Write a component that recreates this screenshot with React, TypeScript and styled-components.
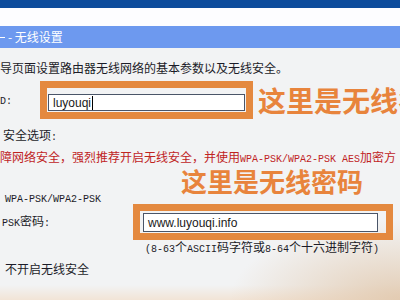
import React from "react";
import styled, { createGlobalStyle } from "styled-components";

const Global = createGlobalStyle`
  html, body { margin: 0; padding: 0; }
  body {
    width: 400px;
    height: 300px;
    overflow: hidden;
    background: #f2f3f4;
    font-family: "Noto Sans CJK SC", sans-serif;
  }
`;

const Page = styled.div`
  width: 400px;
  height: 300px;
  overflow: hidden;
  display: flex;
  flex-direction: column;
  color: #1c1c28;
  font-size: 12px;
  background:
    radial-gradient(ellipse 170px 80px at 100% 100%, rgba(226, 202, 176, 0.95), rgba(242, 243, 244, 0) 100%),
    linear-gradient(to bottom, rgba(242, 243, 244, 0) 95%, rgba(242, 228, 214, 1) 100%),
    #f2f3f4;
`;

const TopBand = styled.div`
  height: 8px;
  background: #0d4c9c;
  flex-shrink: 0;
`;

const WhiteBand = styled.div`
  height: 18px;
  background: #fdfdff;
  flex-shrink: 0;
`;

const TitleBar = styled.div`
  height: 22px;
  flex-shrink: 0;
  background: #6d99ef;
  color: #ffffff;
  display: flex;
  align-items: center;
  padding-left: 8px;
  font-size: 12px;
  line-height: 14px;
  position: relative;
  &::before {
    content: "";
    position: absolute;
    left: 0;
    top: 11px;
    width: 5px;
    height: 1px;
    background: #ffffff;
  }
`;

const Line = styled.div<{ $top?: number; $indent?: number; $red?: boolean }>`
  margin-top: ${(p) => p.$top ?? 0}px;
  padding-left: ${(p) => p.$indent ?? 0}px;
  line-height: 14px;
  height: 14px;
  white-space: nowrap;
  color: ${(p) => (p.$red ? "#c0241f" : "#1c1c28")};
  flex-shrink: 0;
`;

const Mono = styled.span`
  font-family: "Liberation Mono", monospace;
  font-size: 10px;
`;

const MonoLine = styled.div`
  font-family: "Liberation Mono", monospace;
  font-size: 10px;
  line-height: 8px;
  height: 8px;
  padding-left: 5px;
  white-space: nowrap;
  flex-shrink: 0;
`;

const FieldRow = styled.div<{ $top?: number; $height: number; $center?: boolean }>`
  margin-top: ${(p) => p.$top ?? 0}px;
  height: ${(p) => p.$height}px;
  display: flex;
  align-items: ${(p) => (p.$center ? "center" : "flex-start")};
  flex-shrink: 0;
  white-space: nowrap;
`;

const Label = styled.div<{ $width: number; $indent?: number; $top?: number }>`
  width: ${(p) => p.$width}px;
  padding-left: ${(p) => p.$indent ?? 0}px;
  margin-top: ${(p) => p.$top ?? 0}px;
  box-sizing: border-box;
  line-height: 14px;
  flex-shrink: 0;
`;

const Frame = styled.div<{ $width: number; $height: number; $pad: string }>`
  width: ${(p) => p.$width}px;
  height: ${(p) => p.$height}px;
  box-sizing: border-box;
  border: 7px solid #e4893f;
  padding: ${(p) => p.$pad};
  flex-shrink: 0;
`;

const TextBox = styled.div<{ $height: number }>`
  height: ${(p) => p.$height}px;
  box-sizing: border-box;
  border: 1px solid #4a5568;
  background: #ffffff;
  font-family: "Liberation Sans", Arial, sans-serif;
  font-size: 12px;
  color: #1a1a1a;
  padding-left: 4px;
  display: flex;
  align-items: center;
`;

const Caret = styled.span`
  display: inline-block;
  width: 1px;
  height: 14px;
  margin-left: 1px;
  background: #000;
`;

const Callout = styled.div<{ $indent?: number; $top?: number; $size: number }>`
  margin-left: ${(p) => p.$indent ?? 0}px;
  margin-top: ${(p) => p.$top ?? 0}px;
  font-family: "Noto Sans CJK SC", sans-serif;
  font-weight: 700;
  font-size: ${(p) => p.$size}px;
  line-height: 30px;
  height: 30px;
  color: #e8843c;
  white-space: nowrap;
  flex-shrink: 0;
`;

export default function App() {
  return (
    <>
      <Global />
      <Page>
        <TopBand />
        <WhiteBand />
        <TitleBar>- 无线设置</TitleBar>
        <Line $top={13}>导页面设置路由器无线网络的基本参数以及无线安全。</Line>
        <FieldRow $top={5} $height={40} $center>
          <Label $width={40}>
            <Mono>D:</Mono>
          </Label>
          <Frame $width={213} $height={38} $pad="6px 1px 1px 1px">
            <TextBox $height={17}>
              luyouqi
              <Caret />
            </TextBox>
          </Frame>
          <Callout $indent={5} $size={28}>这里是无线名</Callout>
        </FieldRow>
        <Line $top={8} $indent={3}>
          安全选项<Mono>:</Mono>
        </Line>
        <Line $top={8} $red>
          障网络安全，强烈推荐开启无线安全，并使用<Mono>WPA-PSK/WPA2-PSK AES</Mono>加密方
        </Line>
        <Callout $indent={181} $top={2} $size={26}>这里是无线密码</Callout>
        <MonoLine>WPA-PSK/WPA2-PSK</MonoLine>
        <FieldRow $height={36}>
          <Label $width={133} $indent={2} $top={10}>
            <Mono>PSK</Mono>密码<Mono>:</Mono>
          </Label>
          <Frame $width={260} $height={36} $pad="2px 8px 0 3px">
            <TextBox $height={19}>www.luyouqi.info</TextBox>
          </Frame>
        </FieldRow>
        <Line $indent={145}>
          <Mono>(8-63</Mono>个<Mono>ASCII</Mono>码字符或<Mono>8-64</Mono>个十六进制字符<Mono>)</Mono>
        </Line>
        <Line $top={8} $indent={5}>不开启无线安全</Line>
      </Page>
    </>
  );
}
